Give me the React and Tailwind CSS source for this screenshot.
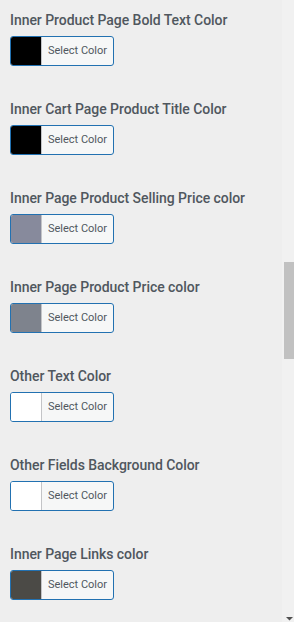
import React from "react";

const items = [
  { label: "Inner Product Page Bold Text Color", color: "bg-[#000000]" },
  { label: "Inner Cart Page Product Title Color", color: "bg-[#000000]" },
  { label: "Inner Page Product Selling Price color", color: "bg-[#878a9c]" },
  { label: "Inner Page Product Price color", color: "bg-[#7e838d]" },
  { label: "Other Text Color", color: "bg-[#ffffff]" },
  { label: "Other Fields Background Color", color: "bg-[#ffffff]" },
  { label: "Inner Page Links color", color: "bg-[#4b4a46]" },
];

export default function App() {
  return (
    <div className="flex w-[294px] h-[622px] overflow-hidden bg-[#eeeeee]" style={{ fontFamily: "Roboto, 'Liberation Sans', sans-serif" }}>
      <div className="flex-1 pl-[10px] pt-[11px] flex flex-col">
        {items.map((it, i) => (
          <div key={i} className="h-[89px] shrink-0 flex flex-col">
            <div className="text-[14px] leading-[18px] font-medium text-[#50575e] whitespace-nowrap tracking-[-0.05px]">{it.label}</div>
            <div className="mt-[7px] w-[104px] h-[30px] border border-[#2271b1] rounded-[3px] flex overflow-hidden bg-[#f6f7f7]">
              <div className={`w-[31px] h-full ${it.color} border-r border-[#c3c4c7]`} />
              <div className="flex-1 flex items-center justify-center text-[11px] text-[#50575e]">Select Color</div>
            </div>
          </div>
        ))}
      </div>
      <div className="w-[12px] h-full bg-[#f1f1f1] flex flex-col relative">
        <svg className="absolute left-[4px] top-[-5px]" width="7" height="7" viewBox="0 0 7 7"><path d="M0 5 L3.5 1.5 L7 5 Z" fill="#505050" /></svg>
        <div className="mt-[262px] ml-[2px] w-[10px] h-[97px] bg-[#c1c1c1]" />
        <svg className="absolute left-[4px] top-[615px]" width="7" height="7" viewBox="0 0 7 7"><path d="M0 2 L7 2 L3.5 5.5 Z" fill="#505050" /></svg>
      </div>
    </div>
  );
}
